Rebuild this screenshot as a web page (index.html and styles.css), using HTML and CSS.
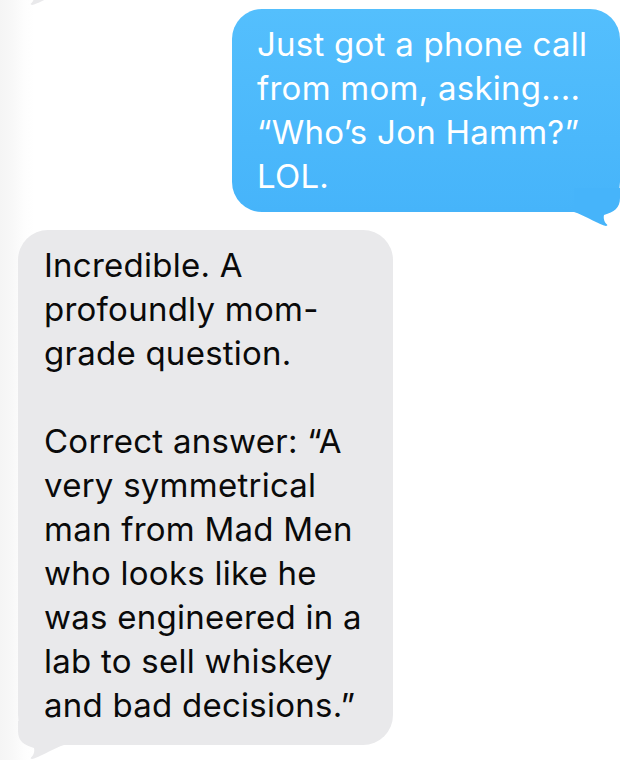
FILE: index.html
```html
<!DOCTYPE html>
<html lang="en">
<head>
<meta charset="utf-8">
<title>Messages</title>
<link rel="stylesheet" href="styles.css">
</head>
<body>
<div class="thread">
  <div class="bubble them prev">
    <svg class="tail tail-them" viewBox="0 0 50 40" width="50" height="40" aria-hidden="true"><path d="M50 0 H4 V10 C4 20 10 24 20 27 C21 31 19 35 17 36.5 C16 37.5 17.5 38.5 20 37.5 C30 34 40 27 50 24 Z"/></svg>
  </div>
  <div class="bubble me">
    <p class="text">Just got a phone call<br>from mom, asking....<br>“Who’s Jon Hamm?”<br>LOL.</p>
    <svg class="tail tail-me" viewBox="0 0 50 40" width="50" height="40" aria-hidden="true"><path d="M0 0 H46 V10 C46 20 40 24 30 27 C29 31 31 35 33 36.5 C34 37.5 32.5 38.5 30 37.5 C20 34 10 27 0 24 Z"/></svg>
  </div>
  <div class="bubble them">
    <p class="text">Incredible. A<br>profoundly mom-<br>grade question.<br><br>Correct answer: “A<br>very symmetrical<br>man from Mad Men<br>who looks like he<br>was engineered in a<br>lab to sell whiskey<br>and bad decisions.”</p>
    <svg class="tail tail-them" viewBox="0 0 50 40" width="50" height="40" aria-hidden="true"><path d="M50 0 H4 V10 C4 20 10 24 20 27 C21 31 19 35 17 36.5 C16 37.5 17.5 38.5 20 37.5 C30 34 40 27 50 24 Z"/></svg>
  </div>
</div>
</body>
</html>
```

FILE: styles.css
```css
html, body {
  margin: 0;
  padding: 0;
}
body {
  width: 636px;
  height: 760px;
  overflow: hidden;
  background: linear-gradient(90deg, #f5f5f5 0, #f8f8f8 12px, #fdfdfd 24px, #ffffff 34px);
  font-family: "Inter", "Liberation Sans", sans-serif;
}
.thread {
  display: flex;
  flex-direction: column;
  gap: 18px;
  padding: 9px 16px 0 18px;
}
.bubble {
  position: relative;
  border-radius: 30px;
  box-sizing: border-box;
}
.text {
  margin: 0;
  font-size: 33px;
  line-height: 44px;
  white-space: nowrap;
  letter-spacing: 0.25px;
}
.me {
  align-self: flex-end;
  width: 388px;
  padding: 12.5px 20px 14.5px 25px;
  background: linear-gradient(180deg, #54bffd 0%, #46b4fa 100%);
  color: #ffffff;
}
.them {
  align-self: flex-start;
  width: 375px;
  padding: 13px 20px 18px 26px;
  background: #e9e9eb;
  color: #0a0a0a;
}
.prev {
  height: 20px;
  margin-top: -38px;
  padding: 0;
}
.tail {
  position: absolute;
  bottom: -16px;
  display: block;
}
.tail-me {
  right: -4px;
  fill: #46b4fa;
}
.tail-them {
  left: -4px;
  fill: #e9e9eb;
}
```
